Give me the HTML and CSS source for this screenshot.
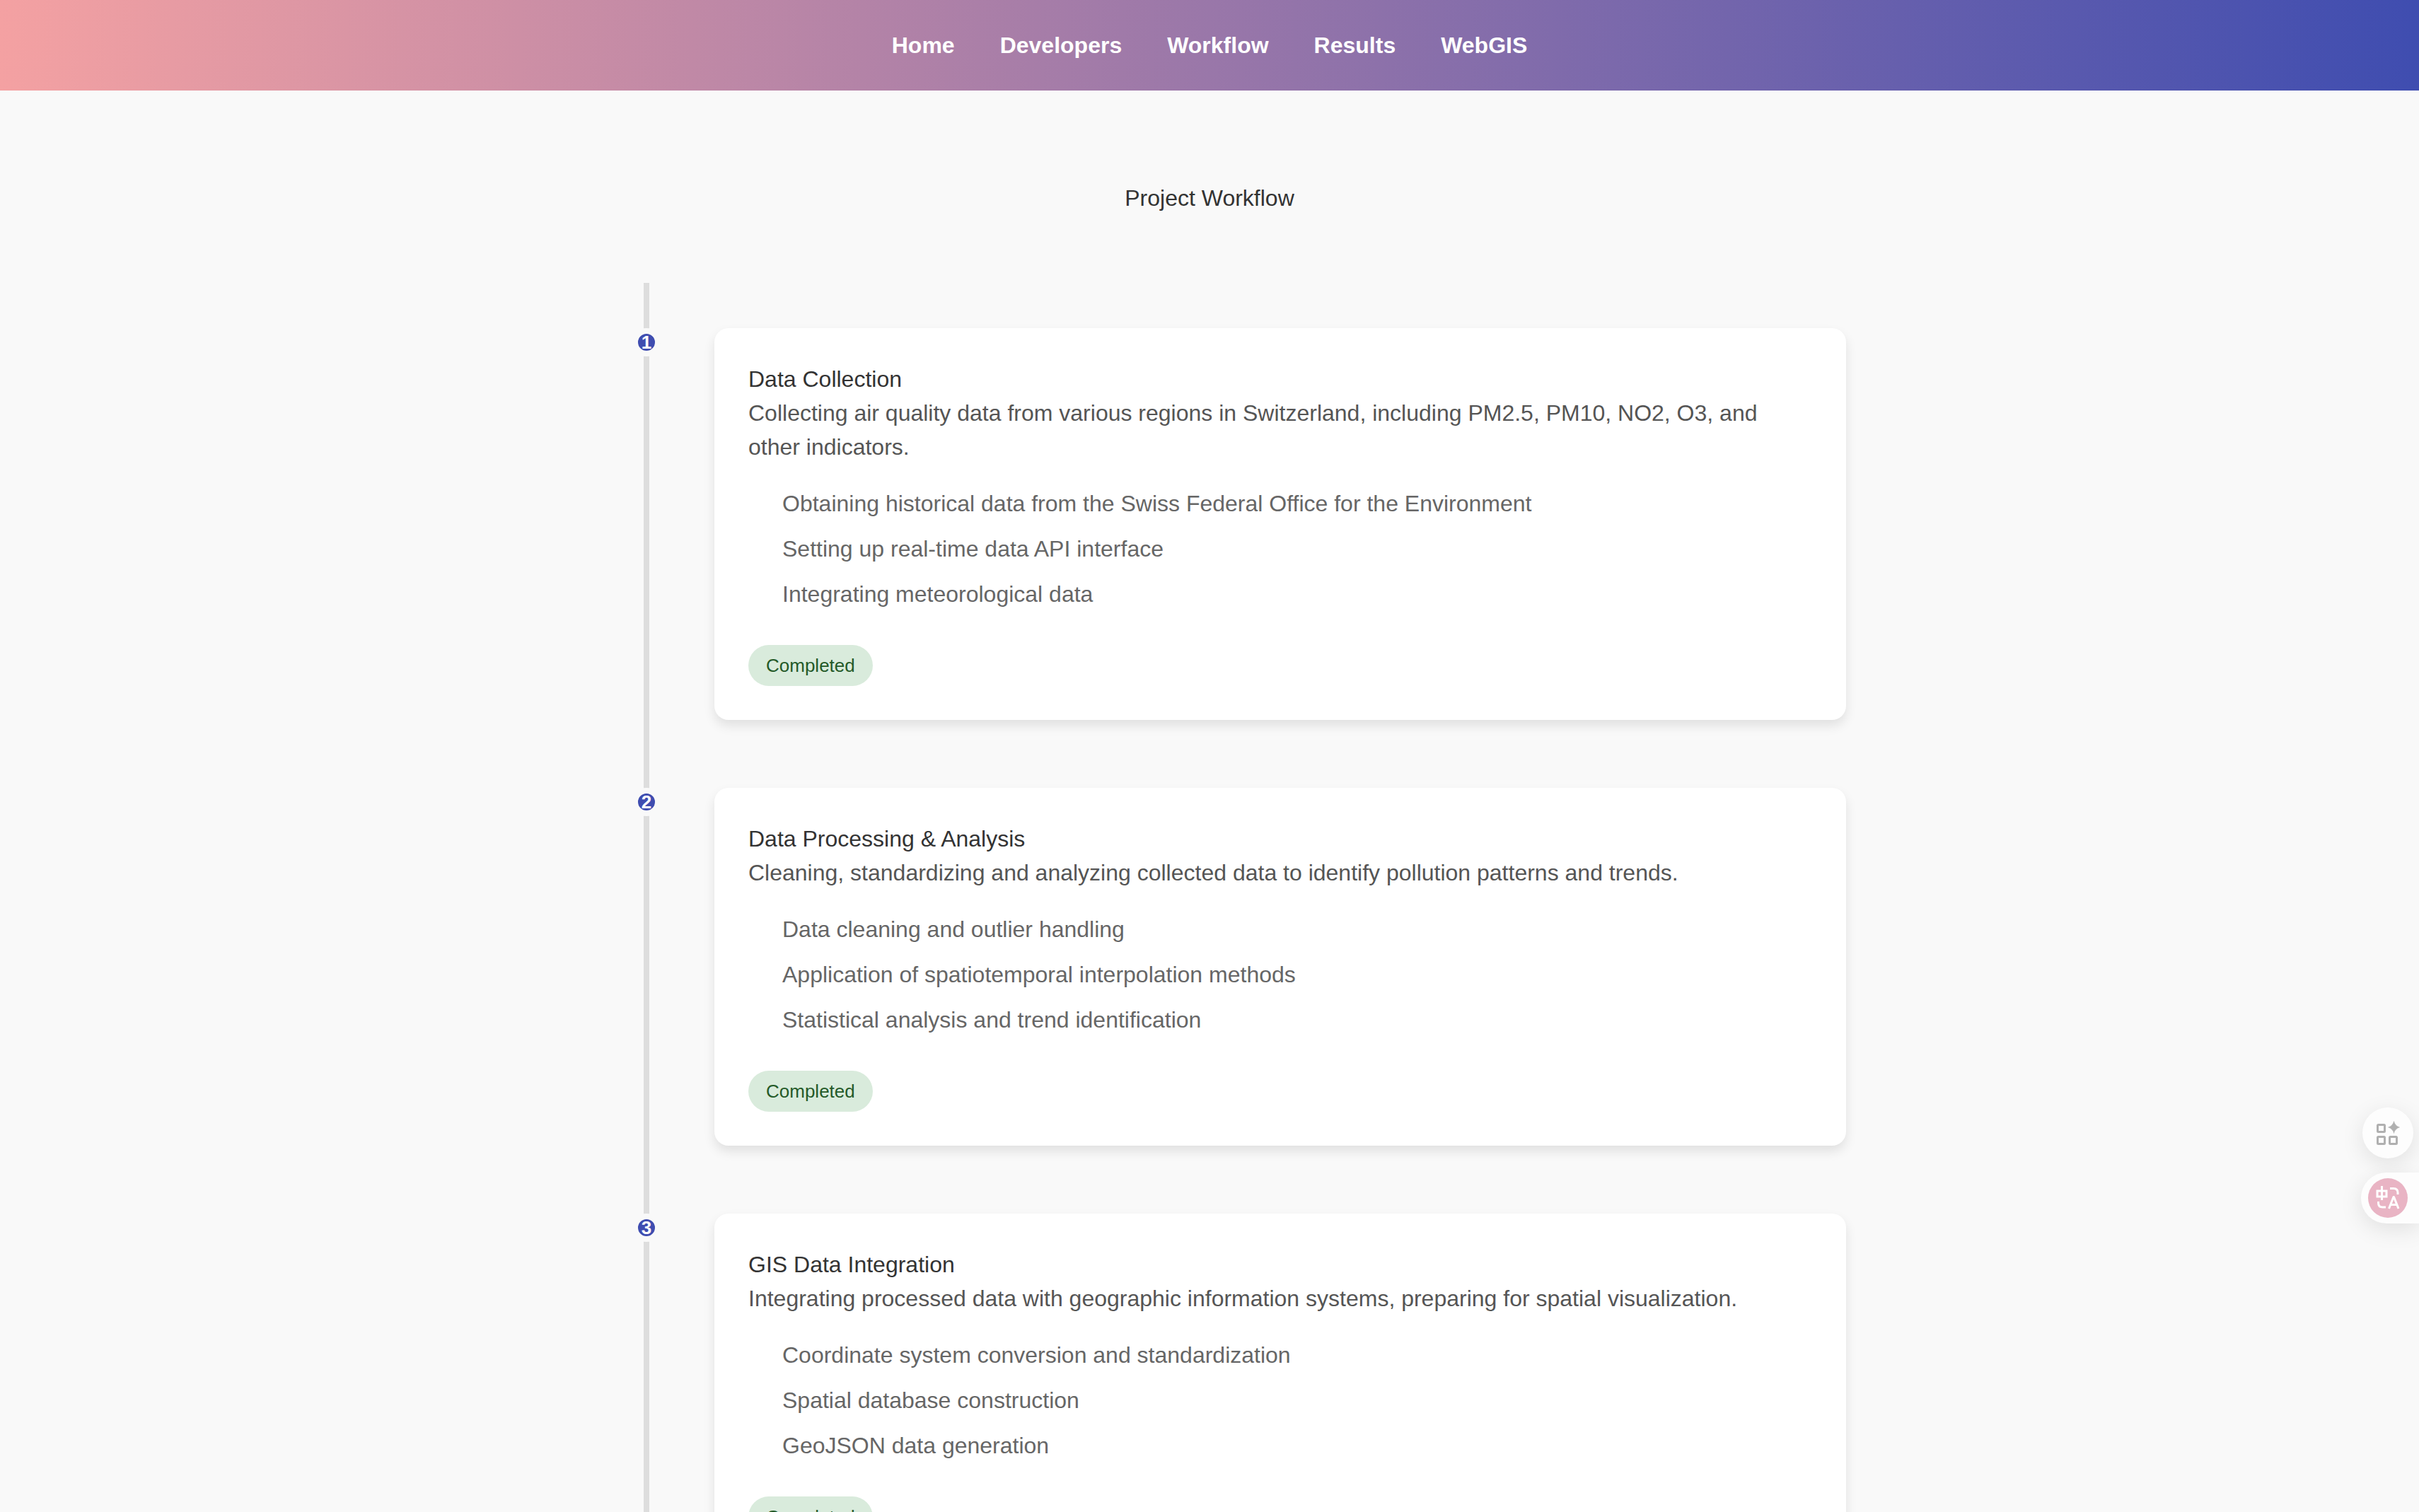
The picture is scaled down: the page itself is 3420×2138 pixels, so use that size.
FILE: index.html
```html
<!DOCTYPE html>
<html lang="en">
<head>
<meta charset="utf-8">
<title>Project Workflow</title>
<link rel="stylesheet" href="styles.css">
</head>
<body>
<header class="site-header">
  <nav class="nav">
    <a href="#home">Home</a>
    <a href="#developers">Developers</a>
    <a href="#workflow">Workflow</a>
    <a href="#results">Results</a>
    <a href="#webgis">WebGIS</a>
  </nav>
</header>
<main class="page">
  <h1 class="page-title">Project Workflow</h1>
  <ol class="timeline">
    <li class="step">
      <span class="step-number">1</span>
      <article class="card">
        <h2 class="card-title">Data Collection</h2>
        <p class="card-text">Collecting air quality data from various regions in Switzerland, including PM2.5, PM10, NO2, O3, and other indicators.</p>
        <ul class="tasks">
          <li>Obtaining historical data from the Swiss Federal Office for the Environment</li>
          <li>Setting up real-time data API interface</li>
          <li>Integrating meteorological data</li>
        </ul>
        <span class="status">Completed</span>
      </article>
    </li>
    <li class="step">
      <span class="step-number">2</span>
      <article class="card">
        <h2 class="card-title">Data Processing &amp; Analysis</h2>
        <p class="card-text">Cleaning, standardizing and analyzing collected data to identify pollution patterns and trends.</p>
        <ul class="tasks">
          <li>Data cleaning and outlier handling</li>
          <li>Application of spatiotemporal interpolation methods</li>
          <li>Statistical analysis and trend identification</li>
        </ul>
        <span class="status">Completed</span>
      </article>
    </li>
    <li class="step">
      <span class="step-number">3</span>
      <article class="card">
        <h2 class="card-title">GIS Data Integration</h2>
        <p class="card-text">Integrating processed data with geographic information systems, preparing for spatial visualization.</p>
        <ul class="tasks">
          <li>Coordinate system conversion and standardization</li>
          <li>Spatial database construction</li>
          <li>GeoJSON data generation</li>
        </ul>
        <span class="status">Completed</span>
      </article>
    </li>
  </ol>
</main>
<aside class="dock">
  <button class="dock-tools" type="button" aria-label="Tools">
    <svg width="34" height="36" viewBox="0 0 34 36" fill="none" stroke="#b0b0b0" stroke-width="3">
      <rect x="2.5" y="6.5" width="10" height="10" rx="1"/>
      <rect x="2.5" y="23.5" width="10" height="10" rx="1"/>
      <rect x="19.5" y="23.5" width="10" height="10" rx="1"/>
      <path d="M25.500 1.500q1.500 6.500 8 8.500q-6.500 2-8 8.500q-1.500-6.500-8-8.500q6.500-2 8-8.500z" fill="#b0b0b0" stroke="#b0b0b0" stroke-width="0.500"/>
    </svg>
  </button>
  <button class="dock-translate" type="button" aria-label="Translate">
    <svg width="56" height="56" viewBox="0 0 56 56" fill="none" stroke="#fff" stroke-width="3">
      <circle cx="28" cy="28" r="28" fill="#e9b4c4" stroke="none"/>
      <path d="M13 18h13v8h-13zM19.500 11v20"/>
      <path d="M31 14.500h5q6 0 6 6v2.500M14.500 33v2q0 6 6 6h4.500"/>
      <path d="M29.500 43l6.500-16.500h0.500L43 43M32 37.500h9" stroke-linejoin="round"/>
    </svg>
  </button>
</aside>
</body>
</html>
```

FILE: styles.css
```css
* {
  box-sizing: border-box;
  margin: 0;
  padding: 0;
}

body {
  background: #f9f9f9;
  color: #333;
  font: 32px/48px "Liberation Sans", Arial, sans-serif;
}

.site-header {
  padding: 40px;
  background: linear-gradient(to right, #f4a1a2, #3f4db0);
}

.nav {
  display: flex;
  justify-content: center;
  gap: 64px;
}

.nav a {
  color: #fff;
  font-weight: bold;
  text-decoration: none;
}

.page {
  max-width: 1800px;
  margin: 0 auto;
  padding: 128px 0;
}

.page-title {
  margin-bottom: 96px;
  font-size: 32px;
  font-weight: normal;
  text-align: center;
}

.timeline {
  position: relative;
  display: flex;
  flex-direction: column;
  gap: 96px;
  padding: 64px 0;
  list-style: none;
}

/* Vertical rail behind the step numbers */
.timeline::before {
  content: "";
  position: absolute;
  top: 0;
  bottom: 0;
  left: 100px;
  width: 8px;
  background: #ddd;
}

.step {
  position: relative;
  display: grid;
  grid-template-columns: 40px 1fr;
  align-items: start;
  gap: 76px;
  padding-left: 84px;
}

.step-number {
  display: flex;
  align-items: center;
  justify-content: center;
  width: 40px;
  height: 40px;
  border: 8px solid #f9f9f9;
  border-radius: 50%;
  background: #3f4db0;
  color: #fff;
  font-size: 26px;
  font-weight: bold;
  line-height: 24px;
}

.card {
  padding: 48px;
  border-radius: 20px;
  background: #fff;
  box-shadow: 0 8px 16px rgba(0, 0, 0, 0.1);
}

.card-title {
  font-size: 32px;
  font-weight: normal;
}

.card-text {
  color: #555;
}

.tasks {
  display: flex;
  flex-direction: column;
  gap: 16px;
  margin: 32px 0 48px;
  padding-left: 48px;
  color: #666;
  list-style: none;
}

.status {
  display: block;
  width: fit-content;
  padding: 10px 25px;
  border-radius: 30px;
  background: #d9ebdc;
  color: #245a28;
  font-size: 26px;
  line-height: 38px;
}

/* Floating shortcuts on the right edge */
.dock {
  position: fixed;
  top: 1566px;
  right: 0;
  display: flex;
  flex-direction: column;
  align-items: flex-end;
  gap: 20px;
}

.dock button {
  display: flex;
  align-items: center;
  height: 72px;
  border: 0;
  background: #fdfdfd;
  box-shadow: 0 8px 32px rgba(0, 0, 0, 0.1);
}

.dock-tools {
  justify-content: center;
  width: 72px;
  margin-right: 8px;
  border-radius: 50%;
}

.dock-translate {
  width: 82px;
  padding-left: 10px;
  border-radius: 36px 0 0 36px;
}
```
